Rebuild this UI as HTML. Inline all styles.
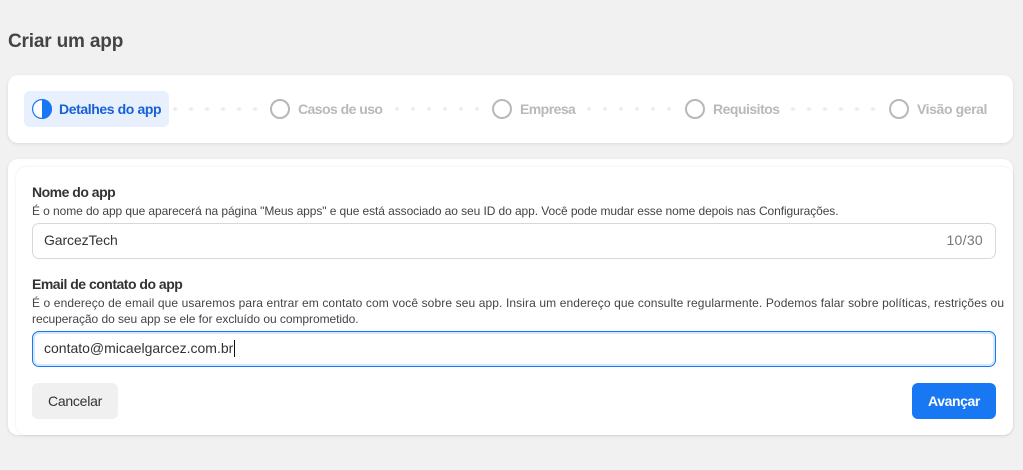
<!DOCTYPE html>
<html lang="pt-BR"><head><meta charset="utf-8"><title>Criar um app</title>
<style>
html,body{margin:0;padding:0;width:1023px;height:470px;overflow:hidden;background:#f1f1f1;font-family:"Liberation Sans",sans-serif;color:#333}
.a{position:absolute;white-space:nowrap}
.card{position:absolute;background:#fff;border-radius:10px;box-shadow:0 1px 3px rgba(0,0,0,.1)}
.dot{position:absolute;width:4px;height:4px;border-radius:50%;background:#eeeeee;top:107px}
.ring{position:absolute;width:16px;height:16px;border:2px solid #b8b8b8;border-radius:50%;top:99px}
.st{position:absolute;top:101px;font-size:14px;font-weight:700;color:#b9b9b9;white-space:nowrap;line-height:16px;letter-spacing:-.5px}
.lab{font-size:14px;font-weight:700;line-height:16px;color:#333;letter-spacing:-.5px}
.sm{font-size:12px;line-height:16px;color:#444}
.inp{position:absolute;box-sizing:border-box;left:32px;width:964px;height:36px;border-radius:7px;background:#fff}
</style></head><body>
<div class="a" style="left:8px;top:30px;font-size:19px;font-weight:700;line-height:24px;color:#444;letter-spacing:-.17px">Criar um app</div>

<div class="card" style="left:8px;top:75px;width:1005px;height:68px"></div>
<div class="a" style="left:24px;top:91px;width:145px;height:36px;background:#e7f0fc;border-radius:6px"></div>
<svg class="a" style="left:32px;top:99px" width="20" height="20" viewBox="0 0 20 20"><circle cx="10" cy="10" r="9.4" fill="#fff" stroke="#1877f2" stroke-width="1.2"/><path d="M10 0a10 10 0 0 1 0 20z" fill="#1877f2"/></svg>
<div class="st" style="left:59px;color:#1661d8;letter-spacing:-.4px">Detalhes do app</div>

<div class="ring" style="left:270px"></div><div class="st" style="left:298px;letter-spacing:-.55px">Casos de uso</div>
<div class="ring" style="left:492px"></div><div class="st" style="left:520px;letter-spacing:-.55px">Empresa</div>
<div class="ring" style="left:685px"></div><div class="st" style="left:713px">Requisitos</div>
<div class="ring" style="left:889px"></div><div class="st" style="left:917px;letter-spacing:-.4px">Visão geral</div>

<i class="dot" style="left:173px"></i><i class="dot" style="left:189px"></i><i class="dot" style="left:205px"></i><i class="dot" style="left:221px"></i><i class="dot" style="left:237px"></i><i class="dot" style="left:253px"></i>
<i class="dot" style="left:395px"></i><i class="dot" style="left:411px"></i><i class="dot" style="left:427px"></i><i class="dot" style="left:443px"></i><i class="dot" style="left:459px"></i><i class="dot" style="left:475px"></i>
<i class="dot" style="left:587px"></i><i class="dot" style="left:603px"></i><i class="dot" style="left:619px"></i><i class="dot" style="left:635px"></i><i class="dot" style="left:651px"></i><i class="dot" style="left:667px"></i>
<i class="dot" style="left:791px"></i><i class="dot" style="left:807px"></i><i class="dot" style="left:823px"></i><i class="dot" style="left:839px"></i><i class="dot" style="left:855px"></i><i class="dot" style="left:871px"></i>

<div class="card" style="left:8px;top:159px;width:1005px;height:276px"></div>
<div class="card" style="left:16px;top:167px;width:997px;height:268px;box-shadow:0 0 2px rgba(0,0,0,.1)"></div>

<div class="a lab" style="left:32px;top:184px">Nome do app</div>
<div class="a sm" style="left:32px;top:203px;letter-spacing:-.084px">É o nome do app que aparecerá na página "Meus apps" e que está associado ao seu ID do app. Você pode mudar esse nome depois nas Configurações.</div>
<div class="inp" style="top:223px;border:1px solid #d8d8d8"></div>
<div class="a" style="left:44px;top:232px;font-size:14px;line-height:16px;color:#333;letter-spacing:-.1px">GarcezTech</div>
<div class="a" style="right:40px;top:232px;font-size:14px;line-height:16px;color:#777;letter-spacing:.3px">10/30</div>

<div class="a lab" style="left:32px;top:276px">Email de contato do app</div>
<div class="a sm" style="left:32px;top:295px;letter-spacing:.11px">É o endereço de email que usaremos para entrar em contato com você sobre seu app. Insira um endereço que consulte regularmente. Podemos falar sobre políticas, restrições ou</div>
<div class="a sm" style="left:32px;top:311px;letter-spacing:-.05px">recuperação do seu app se ele for excluído ou comprometido.</div>
<div class="inp" style="top:331px;border:1px solid #1877f2;box-shadow:inset 0 0 0 2px #d6e6fc"></div>
<div class="a" style="left:44px;top:340px;font-size:14px;line-height:16px;color:#333">contato@micaelgarcez.com.br</div>
<div class="a" style="left:234px;top:340px;width:1px;height:17px;background:#111"></div>

<div class="a" style="left:32px;top:383px;width:86px;height:36px;background:#f0f0f0;border-radius:6px;text-align:center;font-size:14px;line-height:36px;color:#333;letter-spacing:-.25px">Cancelar</div>
<div class="a" style="left:912px;top:383px;width:84px;height:36px;background:#1877f2;border-radius:6px;text-align:center;font-size:14px;font-weight:700;line-height:36px;color:#fff;letter-spacing:-.4px">Avançar</div>
</body></html>
